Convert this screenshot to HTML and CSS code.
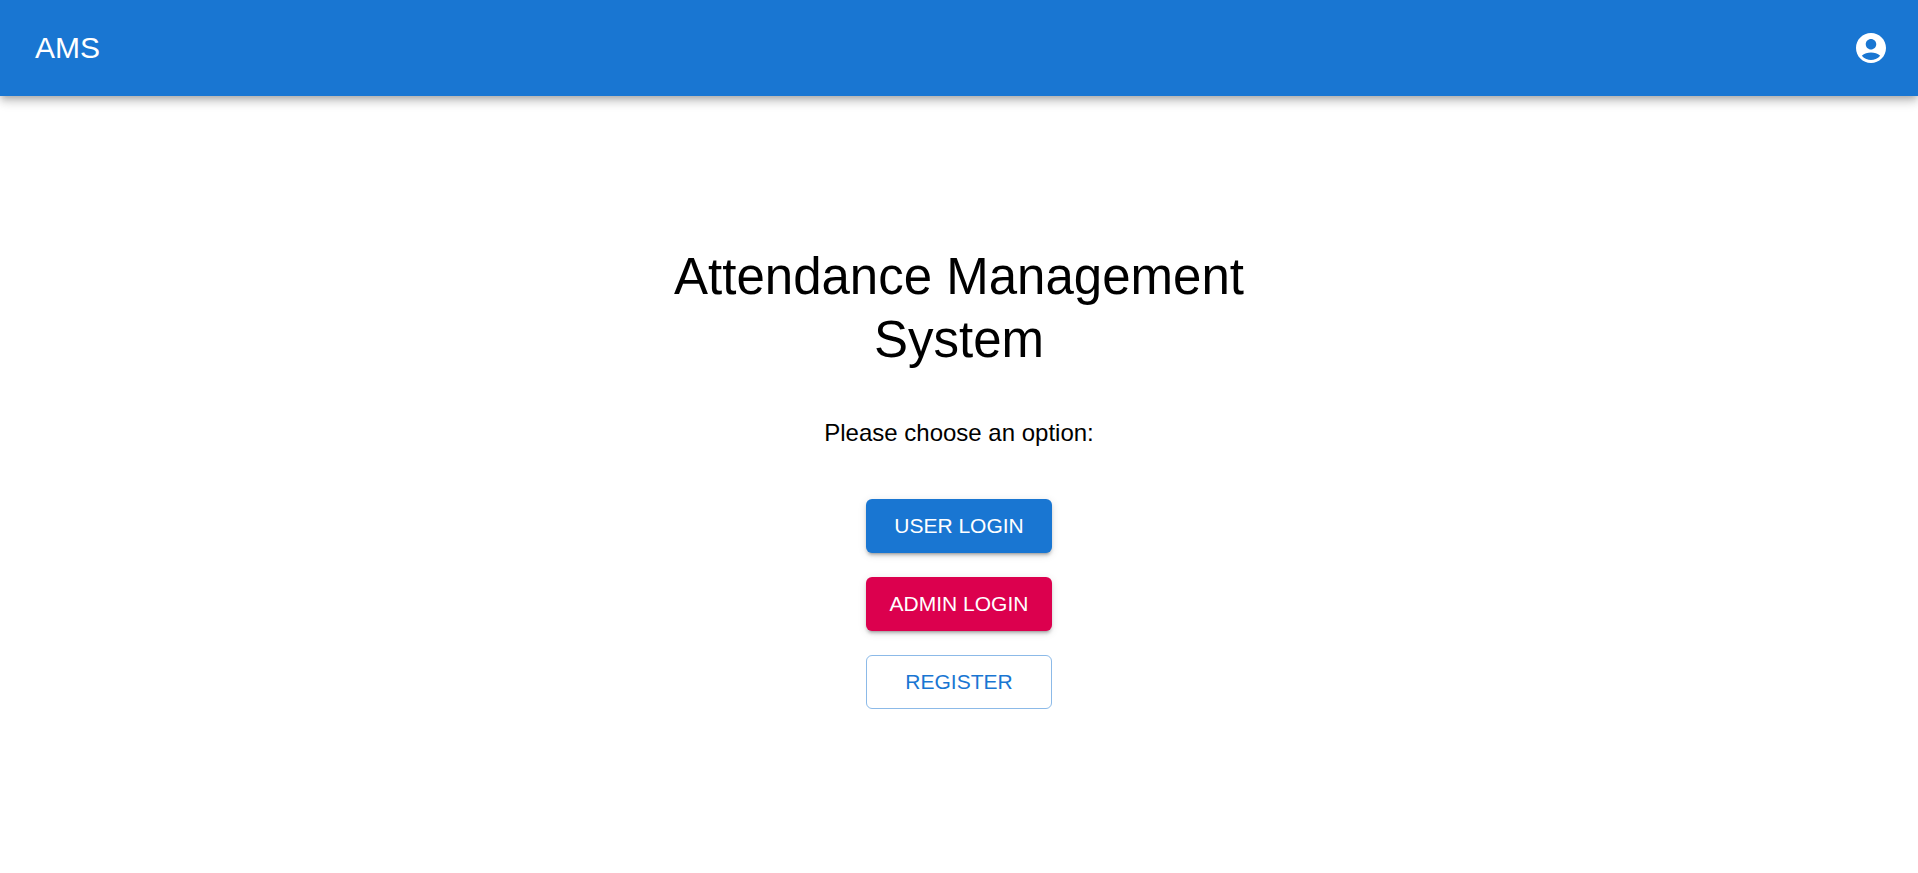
FILE: index.html
```html
<!DOCTYPE html>
<html lang="en">
<head>
  <meta charset="utf-8">
  <meta name="viewport" content="width=device-width, initial-scale=1">
  <title>Attendance Management System</title>
  <link rel="stylesheet" href="styles.css">
</head>
<body>
  <header class="app-bar">
    <span class="brand">AMS</span>
    <button class="account-button" type="button" aria-label="Account">
      <svg class="account-icon" viewBox="0 0 24 24" aria-hidden="true"><path d="M12 2C6.48 2 2 6.48 2 12s4.48 10 10 10 10-4.48 10-10S17.52 2 12 2zm0 4c1.93 0 3.5 1.57 3.5 3.5S13.93 13 12 13s-3.500-1.570-3.500-3.500S10.070 6 12 6zm0 14c-2.030 0-4.430-.820-6.140-2.880C7.550 15.800 9.680 15 12 15s4.450.800 6.140 2.120C16.430 19.180 14.030 20 12 20z"/></svg>
    </button>
  </header>
  <main class="welcome">
    <h1 class="title">Attendance Management System</h1>
    <p class="prompt">Please choose an option:</p>
    <div class="actions">
      <button class="button button-primary" type="button">USER LOGIN</button>
      <button class="button button-secondary" type="button">ADMIN LOGIN</button>
      <button class="button button-outlined" type="button">REGISTER</button>
    </div>
  </main>
</body>
</html>
```

FILE: styles.css
```css
* {
  box-sizing: border-box;
}

body {
  margin: 0;
  min-height: 100vh;
  display: flex;
  flex-direction: column;
  background: #fff;
  color: #000;
  font-family: Arial, "Liberation Sans", sans-serif;
}

.app-bar {
  display: flex;
  align-items: center;
  justify-content: space-between;
  min-height: 96px;
  padding: 0 12px 0 35px;
  background: #1976d2;
  color: #fff;
  box-shadow: 0 3px 6px -2px rgba(0, 0, 0, 0.2), 0 6px 8px 0 rgba(0, 0, 0, 0.14), 0 2px 15px 0 rgba(0, 0, 0, 0.12);
}

.brand {
  font-size: 30px;
  line-height: 48px;
}

.account-button {
  display: flex;
  padding: 17px;
  border: 0;
  border-radius: 50%;
  background: transparent;
  color: inherit;
  cursor: pointer;
}

.account-icon {
  width: 36px;
  height: 36px;
  fill: currentColor;
}

.welcome {
  flex: 1;
  display: flex;
  flex-direction: column;
  align-items: center;
  justify-content: center;
  width: 100%;
  max-width: 666px;
  margin: 0 auto;
  padding: 0 24px 15px;
  text-align: center;
}

.title {
  margin: 0 0 44px;
  font-size: 51px;
  font-weight: 400;
  line-height: 63px;
}

.prompt {
  margin: 0 0 48px;
  font-size: 24px;
  line-height: 36px;
}

.actions {
  display: grid;
  gap: 24px;
}

.button {
  padding: 8px 23px;
  border: 1px solid transparent;
  border-radius: 6px;
  font-family: inherit;
  font-size: 21px;
  line-height: 36px;
  cursor: pointer;
}

.button-primary,
.button-secondary {
  border: 0;
  padding: 9px 24px;
  color: #fff;
  box-shadow: 0 4px 2px -3px rgba(0, 0, 0, 0.2), 0 3px 3px 0 rgba(0, 0, 0, 0.14), 0 2px 8px 0 rgba(0, 0, 0, 0.12);
}

.button-primary {
  background: #1976d2;
}

.button-secondary {
  background: #dc004e;
}

.button-outlined {
  border-color: rgba(25, 118, 210, 0.5);
  background: transparent;
  color: #1976d2;
}
```
